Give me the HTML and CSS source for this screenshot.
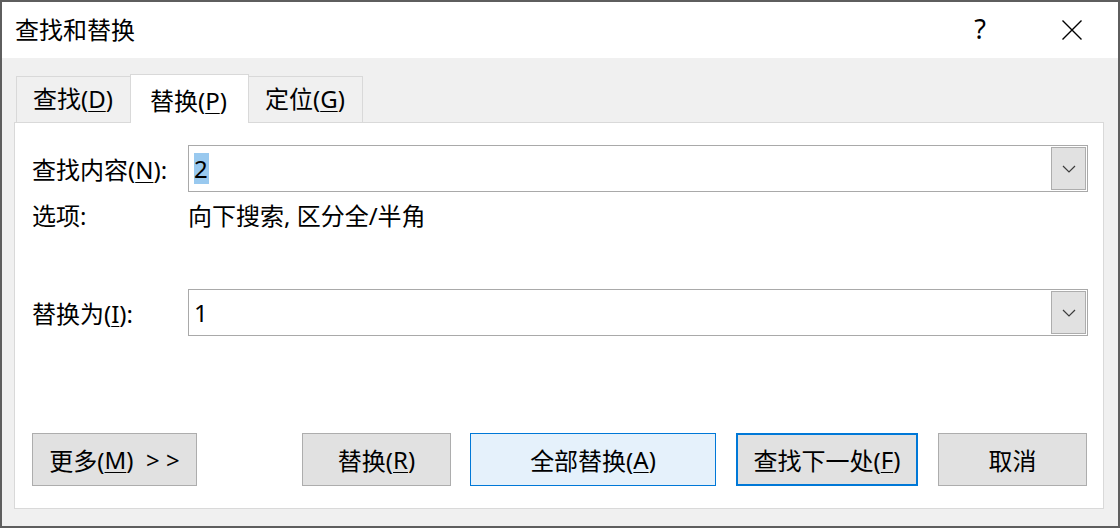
FILE: index.html
```html
<!DOCTYPE html>
<html lang="zh-CN">
<head>
<meta charset="utf-8">
<title>查找和替换</title>
<link rel="stylesheet" href="styles.css">
</head>
<body>
<div class="window">
  <div class="titlebar">
    <div class="title">查找和替换</div>
    <div class="caption-btn help">?</div>
    <div class="caption-btn close">
      <svg width="20" height="20" viewBox="0 0 20 20"><path d="M0.5 0.5 L19.5 19.5 M19.5 0.5 L0.5 19.5" stroke="#000" stroke-width="1.4" fill="none"/></svg>
    </div>
  </div>
  <div class="client">
    <div class="tabs">
      <div class="tab">查找(<u>D</u>)</div>
      <div class="tab active">替换(<u>P</u>)</div>
      <div class="tab">定位(<u>G</u>)</div>
    </div>
    <div class="panel">
      <div class="row row-find">
        <div class="label">查找内容(<u>N</u>):</div>
        <div class="combo">
          <div class="combo-text"><span class="sel">2</span></div>
          <div class="combo-btn">
            <svg width="14" height="8" viewBox="0 0 14 8"><path d="M1 1 L7 7 L13 1" stroke="#3c3c3c" stroke-width="1.2" fill="none"/></svg>
          </div>
        </div>
      </div>
      <div class="row row-options">
        <div class="label">选项:</div>
        <div class="value">向下搜索, 区分全/半角</div>
      </div>
      <div class="row row-replace">
        <div class="label">替换为(<u>I</u>):</div>
        <div class="combo">
          <div class="combo-text">1</div>
          <div class="combo-btn">
            <svg width="14" height="8" viewBox="0 0 14 8"><path d="M1 1 L7 7 L13 1" stroke="#3c3c3c" stroke-width="1.2" fill="none"/></svg>
          </div>
        </div>
      </div>
      <div class="buttons">
        <div class="btn btn-more">更多(<u>M</u>)  &gt; &gt;</div>
        <div class="btn btn-replace">替换(<u>R</u>)</div>
        <div class="btn btn-all">全部替换(<u>A</u>)</div>
        <div class="btn btn-next">查找下一处(<u>F</u>)</div>
        <div class="btn btn-cancel">取消</div>
      </div>
    </div>
  </div>
</div>
</body>
</html>
```
FILE: styles.css
```css
* { box-sizing: border-box; }
html, body { margin: 0; padding: 0; }
body {
  width: 1120px;
  height: 528px;
  background: #5e5e5e;
  padding: 2px;
  font-family: "Noto Sans", "Noto Sans CJK SC", sans-serif;
  font-size: 24px;
  color: #000;
  overflow: hidden;
}
u { text-decoration-thickness: 1px; text-underline-offset: 3px; }
.window {
  width: 1116px;
  height: 524px;
  background: #f0f0f0;
  display: flex;
  flex-direction: column;
}
.titlebar {
  height: 56px;
  background: #fff;
  display: flex;
  align-items: center;
  padding-left: 13px;
}
.title { flex: 1; font-size: 24px; line-height: 30px; }
.caption-btn {
  width: 92px;
  height: 56px;
  display: flex;
  align-items: center;
  justify-content: center;
}
.help { font-size: 27px; line-height: 30px; padding-bottom: 2px; }
.close svg { display: block; }
.client {
  flex: 1;
  padding: 16px 14px 17px 12px;
  display: flex;
  flex-direction: column;
}
.tabs {
  display: flex;
  align-items: flex-end;
  height: 48px;
  margin-left: 2px;
  position: relative;
  z-index: 1;
}
.tab {
  width: 115px;
  height: 46px;
  border: 1px solid #d9d9d9;
  border-bottom: none;
  background: #f0f0f0;
  padding-left: 16px;
  line-height: 44px;
}
.tab + .tab { margin-left: -1px; }
.tab.active {
  width: 119px;
  height: 49px;
  margin-bottom: -1px;
  background: #fff;
  padding-left: 19px;
  line-height: 51px;
  position: relative;
  z-index: 2;
}
.panel {
  flex: 1;
  background: #fff;
  border: 1px solid #d9d9d9;
  padding: 0 15px 22px 17px;
  display: flex;
  flex-direction: column;
}
.row { display: flex; align-items: center; }
.label { width: 156px; flex: none; }
.row-find { margin-top: 22px; }
.row-options { margin-top: 8px; height: 31px; line-height: 31px; }
.row-replace { margin-top: 58px; }
.combo {
  flex: 1;
  height: 47px;
  border: 1px solid #a9a9a9;
  padding: 1px;
  display: flex;
}
.combo-text {
  flex: 1;
  padding-left: 4px;
  display: flex;
  align-items: center;
  line-height: 31px;
}
.sel { background: #99c9ef; padding: 0 1px 0 0; }
.combo-btn {
  width: 35px;
  border: 1px solid #adadad;
  background: #e1e1e1;
  display: flex;
  align-items: center;
  justify-content: center;
}
.combo-btn svg { display: block; }
.buttons {
  margin-top: auto;
  display: flex;
  height: 53px;
}
.btn {
  height: 53px;
  border: 1px solid #adadad;
  background: #e1e1e1;
  display: flex;
  align-items: center;
  justify-content: center;
  white-space: pre;
}
.btn-more { width: 165px; }
.btn-replace { width: 149px; margin-left: auto; }
.btn-all { width: 246px; margin-left: 19px; background: #e5f1fb; border-color: #0078d7; }
.btn-next { width: 182px; margin-left: 20px; border: 2px solid #0078d7; }
.btn-cancel { width: 149px; margin-left: 20px; margin-right: 1px; }
```
